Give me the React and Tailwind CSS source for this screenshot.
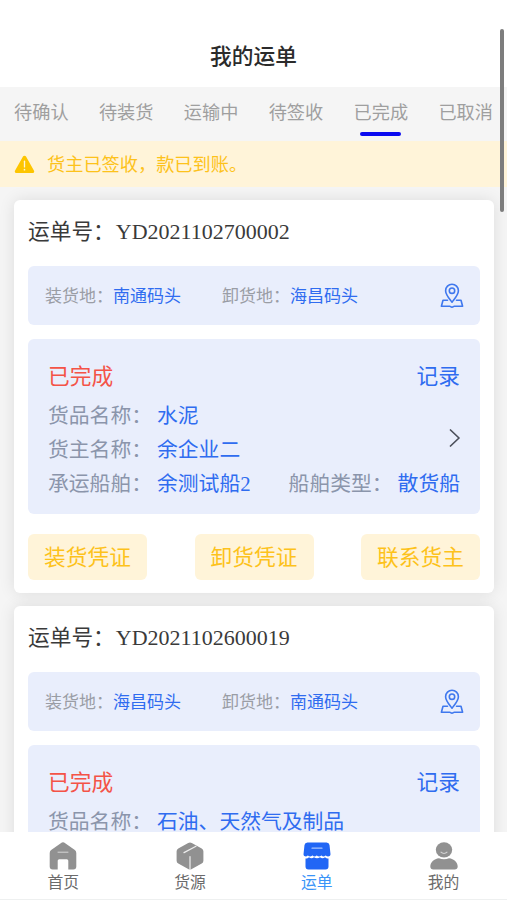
import React, { useState } from 'react';

const tabs = ['待确认', '待装货', '运输中', '待签收', '已完成', '已取消'];

const orders = [
  {
    id: 'YD2021102700002',
    from: '南通码头',
    to: '海昌码头',
    goods: '水泥',
    owner: '余企业二',
    ship: '余测试船2',
    shipType: '散货船',
  },
  {
    id: 'YD2021102600019',
    from: '海昌码头',
    to: '南通码头',
    goods: '石油、天然气及制品',
    owner: '余企业二',
    ship: '余测试船2',
    shipType: '散货船',
  },
];

const WarningIcon = () => (
  <svg viewBox="0 0 22 20" className="w-[21px] h-[19px] shrink-0">
    <path d="M9.4 1.6a1.9 1.9 0 0 1 3.2 0l8.3 14.6a1.8 1.8 0 0 1-1.6 2.8H2.7a1.8 1.8 0 0 1-1.6-2.8z" fill="#fdc500" />
    <path d="M11 6.5v6" stroke="#fff4d9" strokeWidth="1.4" strokeLinecap="round" />
    <circle cx="11" cy="15.4" r="0.9" fill="#fff4d9" />
  </svg>
);

const MapIcon = () => (
  <svg viewBox="0 0 24 26" className="w-6 h-[26px]" fill="none" stroke="#3f78ee" strokeWidth="1.6" strokeLinejoin="round" strokeLinecap="round">
    <path d="M12 19.2C9 15.2 5.600 11.600 5.600 7.700a6.400 6.400 0 0 1 12.800 0C18.400 11.600 15 15.200 12 19.200z" />
    <circle cx="12" cy="7.700" r="2.700" />
    <path d="M7.500 17.200H3L1.400 23.200h8.400c.7 0 1.100 1 2.200 1s1.500-1 2.200-1h8.400L21 17.200h-4.500" />
  </svg>
);

const HomeIcon = () => (
  <svg viewBox="0 0 28 28" className="w-7 h-7">
    <path d="M11.800 1.200a3.600 3.600 0 0 1 4.400 0l9.300 6.600A4 4 0 0 1 27.300 11v13.500a3 3 0 0 1-3 3h-5v-8.700a1.500 1.500 0 0 0-1.500-1.500h-7.600a1.500 1.500 0 0 0-1.500 1.500v8.700h-5a3 3 0 0 1-3-3V11a4 4 0 0 1 1.800-3.200z" fill="#919191" />
    <path d="M9 10.200h10" stroke="#d6d6d6" strokeWidth="1" strokeLinecap="round" />
  </svg>
);

const GoodsIcon = () => (
  <svg viewBox="0 0 28 28" className="w-7 h-7">
    <path d="M12.200.9a3.600 3.600 0 0 1 3.600 0l9.900 5.500a3.200 3.200 0 0 1 1.700 2.800v9.600a3.200 3.200 0 0 1-1.700 2.800l-9.900 5.500a3.600 3.600 0 0 1-3.600 0l-9.900-5.500a3.200 3.200 0 0 1-1.700-2.800V9.200a3.200 3.200 0 0 1 1.700-2.800z" fill="#919191" />
    <path d="M8 10.600 20 4.200M14 14.500v13" stroke="#eee" strokeWidth="1.200" strokeLinecap="round" fill="none" />
  </svg>
);

const OrderIcon = () => (
  <svg viewBox="0 0 28 28" className="w-7 h-7">
    <path d="M4.500.5h19a3 3 0 0 1 3 2.600l1 9.200c0 1.300-1.200 2.300-2.500 2.300s-2.200-1.300-2.200-1.300-1 1.300-2.300 1.300-2.200-1.300-2.200-1.300-.9 1.300-2.200 1.300-2.300-1.300-2.300-1.300-.9 1.300-2.200 1.300-2.200-1.300-2.200-1.300-1 1.300-2.300 1.300-2.200-1.300-2.200-1.300S3.900 14.600 2.900 14.600.400 13.600.500 12.300l1-9.200a3 3 0 0 1 3-2.600z" fill="#2166f5" />
    <path d="M9 6.200h10" stroke="#a9c4fc" strokeWidth="1.200" strokeLinecap="round" />
    <path d="M2.500 16.500c1.600 0 2.800-.6 3.500-1.300 1.500 1.500 3.500 1.500 5 0 1.700 1.500 4.300 1.500 6 0 1.500 1.500 3.500 1.500 5 0 .8.800 2 1.300 3.500 1.300v8a3 3 0 0 1-3 3h-17a3 3 0 0 1-3-3z" fill="#2166f5" />
  </svg>
);

const MineIcon = () => (
  <svg viewBox="0 0 28 28" className="w-7 h-7">
    <ellipse cx="14" cy="7.800" rx="8.200" ry="7.600" fill="#919191" />
    <path d="M11 10.200c1.600 1.700 4.400 1.700 6 0" stroke="#d2d2d2" strokeWidth="1.200" fill="none" strokeLinecap="round" />
    <path d="M9 16.200c3 1.500 7 1.500 10 0 5 .4 8.700 4.300 8.700 8.300 0 1.800-1.200 3-3 3H3.300c-1.800 0-3-1.200-3-3 0-4 3.700-7.900 8.700-8.300z" fill="#919191" />
  </svg>
);

const navItems = [
  { label: '首页', Icon: HomeIcon },
  { label: '货源', Icon: GoodsIcon },
  { label: '运单', Icon: OrderIcon },
  { label: '我的', Icon: MineIcon },
];

const Field = ({ label, value }) => (
  <div className="flex">
    <span className="w-[109px] text-[#8b95ab]">{label}：</span>
    <span className="text-[#2f6cf0]">{value}</span>
  </div>
);

const OrderCard = ({ order }) => (
  <div className="bg-white rounded-md shadow-[0_0_16px_rgba(0,0,0,0.1)] pl-[14px] pr-[13.5px] h-[393px] shrink-0">
    <div className="h-[66px] pt-[15px] leading-[34px] text-[21.7px] text-[#3a3a3a] whitespace-nowrap">
      运单号：<span className="ml-px text-[22px]">{order.id}</span>
    </div>

    <div className="h-[59px] pl-[17px] pr-4 rounded-md bg-[#e9eefc] flex items-center text-[17px] leading-6">
      <div className="w-[177px] pt-0.5 whitespace-nowrap text-[#9a9da5]">
        装货地：<span className="text-[#2f6cf0]">{order.from}</span>
      </div>
      <div className="pt-0.5 whitespace-nowrap text-[#9a9da5]">
        卸货地：<span className="text-[#2f6cf0]">{order.to}</span>
      </div>
      <button className="ml-auto"><MapIcon /></button>
    </div>

    <div className="mt-[14px] h-[175px] px-5 pt-[21px] rounded-md bg-[#e9eefc] text-[20.8px] leading-[34px]">
      <div className="flex justify-between text-[21.7px] h-[39px]">
        <span className="text-[#f45347]">已完成</span>
        <span className="text-[#2f6cf0]">记录</span>
      </div>
      <div className="flex items-center">
        <div className="grow">
          <Field label="货品名称" value={order.goods} />
          <Field label="货主名称" value={order.owner} />
        </div>
        <svg viewBox="0 0 12 20" className="w-3 h-5 mt-[9px]" fill="none" stroke="#4b4f5a" strokeWidth="1.7" strokeLinecap="round" strokeLinejoin="round">
          <path d="M2.500 2l8.500 8-8.500 8" />
        </svg>
      </div>
      <div className="flex justify-between whitespace-nowrap">
        <Field label="承运船舶" value={order.ship} />
        <Field label="船舶类型" value={order.shipType} />
      </div>
    </div>

    <div className="mt-5 flex justify-between">
      {['装货凭证', '卸货凭证', '联系货主'].map((text) => (
        <button key={text} className="w-[119px] h-[46px] pt-0.5 rounded-md bg-[#fff4d9] text-[#fdc21b] text-[21.7px] whitespace-nowrap">
          {text}
        </button>
      ))}
    </div>
  </div>
);

const App = () => {
  const [activeTab, setActiveTab] = useState('已完成');
  const [activeNav, setActiveNav] = useState('运单');

  return (
    <div lang="zh-CN" className="relative w-[507px] h-[900px] flex flex-col overflow-hidden bg-[#f5f5f5] font-['Liberation_Serif','Noto_Sans_CJK_SC',sans-serif]">
      <header className="h-[87px] pt-[39px] shrink-0 bg-white text-center text-[21.7px] leading-9 font-medium text-[#2b2b2b]">
        我的运单
      </header>

      <div className="h-[54px] shrink-0 pl-[14px] flex gap-[30.3px] text-[18.2px] text-[#9f9f9f]">
        {tabs.map((tab) => (
          <button key={tab} onClick={() => setActiveTab(tab)} className="shrink-0 flex flex-col items-center whitespace-nowrap pt-[11px]">
            <span className="leading-[30px]">{tab}</span>
            {activeTab === tab && <span className="mt-1 w-[41px] h-1 rounded-full bg-[#0a0af0]" />}
          </button>
        ))}
      </div>

      <div className="h-[46px] shrink-0 pl-[14px] flex items-center gap-3 bg-[#fff4d9] text-[#fdc21b] text-[18.2px]">
        <WarningIcon />
        <span className="pt-[3px]">货主已签收，款已到账。</span>
      </div>

      <main className="grow min-h-0 overflow-hidden pl-[14px] pr-[13.5px] pt-[13px] flex flex-col gap-[13px]">
        {orders.map((order) => <OrderCard key={order.id} order={order} />)}
      </main>

      <nav className="relative h-[68px] shrink-0 pt-[10px] grid grid-cols-4 bg-white border-b border-[#eef0f0]">
        {navItems.map(({ label, Icon }) => (
          <button key={label} onClick={() => setActiveNav(label)} className="flex flex-col items-center">
            <Icon />
            <span className={`mt-px text-[15.8px] leading-6 ${activeNav === label ? 'text-[#3a94f8]' : 'text-[#6b6b6b]'}`}>{label}</span>
          </button>
        ))}
      </nav>

      {/* Scroll indicator */}
      <div className="absolute right-[3px] top-[29px] w-1 h-[183px] rounded-full bg-[#7d7d7d]" />
    </div>
  );
};

export default App;
